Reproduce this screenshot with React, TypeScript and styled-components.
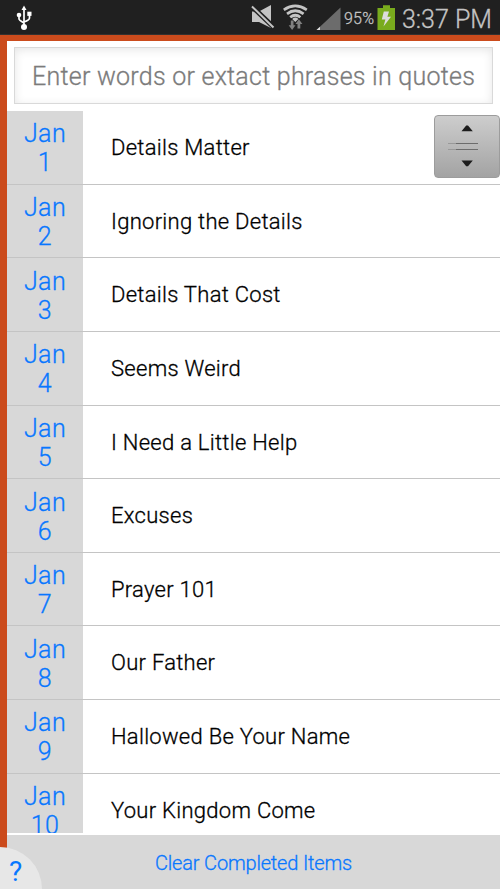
import styled, { createGlobalStyle } from "styled-components";

const GlobalStyle = createGlobalStyle`
  * { box-sizing: border-box; }
  html, body, #root { height: 100%; }
  body {
    margin: 0;
    overflow: hidden;
    font-family: Roboto, sans-serif;
    font-weight: 300;
    -webkit-text-stroke-width: 0.3px;
    background: #cb4b1c;
  }
`;

const Screen = styled.div`
  position: relative;
  width: 500px;
  height: 889px;
  display: flex;
  flex-direction: column;
  overflow: hidden;
  background: #cb4b1c;
`;

const StatusBar = styled.header`
  height: 35px;
  flex-shrink: 0;
  display: flex;
  align-items: flex-start;
  padding: 0 8px 0 16px;
  background: #202020;
  border-bottom: 1px solid #33302f;
  color: #c4c4c4;

  svg { display: block; flex-shrink: 0; }
`;

const StatusIcons = styled.div`
  display: flex;
  margin-left: auto;
`;

const BatteryLevel = styled.span`
  width: 33px;
  margin-left: 3px;
  font-size: 16px;
  line-height: 37px;
  letter-spacing: 0.2px;
  white-space: nowrap;
`;

const Clock = styled.span`
  width: 90px;
  margin-left: 7px;
  font-size: 25px;
  line-height: 39px;
  white-space: nowrap;
`;

const Panel = styled.main`
  flex: 1;
  min-height: 0;
  margin: 6px 0 0 7px;
  display: flex;
  flex-direction: column;
  background: #fff;
`;

const SearchArea = styled.div`
  height: 70px;
  flex-shrink: 0;
  padding: 6px 7px 7px;
`;

const SearchInput = styled.input`
  display: block;
  width: 100%;
  height: 57px;
  padding: 2px 0 0 17px;
  border: 1px solid #d9d9d9;
  border-radius: 0;
  outline: none;
  background: #fff;
  box-shadow: inset 0 2px 10px rgba(0, 0, 0, 0.1);
  font-family: inherit;
  font-size: 25px;
  font-weight: inherit;
  letter-spacing: 0.25px;
  color: #000;

  &::placeholder { color: #7b7b7b; opacity: 1; }
`;

const ListArea = styled.section`
  position: relative;
  height: 722px;
  flex-shrink: 0;
  overflow: hidden;
`;

const Row = styled.article`
  height: 73.65px;
  display: flex;
  border-bottom: 1.4px solid #c4c4c4;
`;

const DateCell = styled.div`
  width: 76px;
  flex-shrink: 0;
  padding-top: 8.3px;
  background: #d8d8d8;
  color: #0877ff;
  font-size: 25px;
  line-height: 29px;
  text-align: center;
  letter-spacing: 0.4px;

  span { display: block; }
`;

const RowTitle = styled.div`
  flex: 1;
  padding-left: 28px;
  color: #000;
  font-size: 22px;
  line-height: 74.6px;
  letter-spacing: 0.28px;
  white-space: nowrap;
`;

const ScrollHandle = styled.div`
  position: absolute;
  top: 4px;
  right: 0;
  width: 66px;
  height: 63px;
  border: 1px solid #9c9c9c;
  border-radius: 4px;
  background: linear-gradient(#cdcdcd, #a3a3a3);

  svg { display: block; }
`;

const Footer = styled.footer`
  flex: 1;
  margin-top: 2px;
  display: flex;
  justify-content: center;
  background: #d8d8d8;
`;

const ClearButton = styled.button`
  height: 54px;
  padding: 0;
  border: 0;
  background: none;
  color: #0877ff;
  font-family: inherit;
  font-size: 20px;
  font-weight: inherit;
  line-height: 56px;
  letter-spacing: -0.18px;
`;

const HelpButton = styled.button`
  position: absolute;
  left: 0;
  bottom: 0;
  width: 42px;
  height: 42px;
  padding: 8px 11px 0 0;
  border: 0;
  border-top-right-radius: 42px;
  background: #e7e7e7;
  color: #0877ff;
  font-family: inherit;
  font-size: 28px;
  font-weight: 400;
  line-height: 34px;
  -webkit-text-stroke-width: 0;
`;

const titles = [
  "Details Matter",
  "Ignoring the Details",
  "Details That Cost",
  "Seems Weird",
  "I Need a Little Help",
  "Excuses",
  "Prayer 101",
  "Our Father",
  "Hallowed Be Your Name",
  "Your Kingdom Come",
];

const UsbIcon = () => (
  <svg width="17" height="34" viewBox="16 0 17 34" fill="#fff" stroke="#fff">
    <path d="M24 9V27M19 15V19Q19 20 24 23M29.5 14V18Q29.5 20 24 22" fill="none" strokeWidth="1.7" />
    <path d="M24 5.5L26.5 10H21.5Z" stroke="none" />
    <circle cx="19" cy="15" r="2.3" stroke="none" />
    <rect x="27.3" y="11.7" width="4.2" height="4.2" stroke="none" />
    <circle cx="24" cy="27" r="3" stroke="none" />
  </svg>
);

const MuteIcon = () => (
  <svg width="24" height="34" viewBox="251 0 24 34">
    <path d="M252 11.5H259L271 5V28L259 22H252Z" fill="#c4c4c4" />
    <path d="M251.5 6L274 27.5" stroke="#202020" strokeWidth="5" />
    <path d="M252 6.5L273.5 27.5" stroke="#c4c4c4" strokeWidth="2" />
  </svg>
);

const WifiIcon = () => (
  <svg width="26" height="34" viewBox="282 0 26 34">
    <g fill="none" stroke="#c4c4c4" strokeWidth="2.7">
      <path d="M283.8 9.8Q295.3 2 306.8 9.8" />
      <path d="M287 13.8Q295.3 7.7 303.6 13.8" />
      <path d="M290.2 17.3Q295.3 13.2 300.4 17.3" />
    </g>
    <path d="M292.2 19Q295.3 16.2 298.4 19L295.3 22Z" fill="#c4c4c4" />
    <path d="M290.8 20.5H293.5V25.2H295.5L292.1 30L288.7 25.2H290.8ZM297.5 28.5H300.3V24H302.4L298.9 19.3L295.5 24H297.5Z" fill="#808080" />
  </svg>
);

const SignalIcon = () => (
  <svg width="25" height="34" viewBox="316 0 25 34">
    <path d="M316.5 30L340.5 7.5V30Z" fill="#6c6c6c" />
    <path d="M316.5 30L320 26.7V30Z" fill="#ddd" />
  </svg>
);

const BatteryIcon = () => (
  <svg width="18" height="34" viewBox="377 0 18 34">
    <path d="M377.5 8H383V5.3H390V8H395V30H377.5Z" fill="#79ab1d" />
    <path d="M383.8 11.5H389L387.4 16.7H391L383.5 26.5L385.4 19.5H381.8Z" fill="#ddd" />
  </svg>
);

const App = () => (
  <Screen>
    <GlobalStyle />
    <StatusBar>
      <UsbIcon />
      <StatusIcons>
        <MuteIcon />
        <svg width="7" height="34" />
        <WifiIcon />
        <svg width="8" height="34" />
        <SignalIcon />
        <BatteryLevel>95%</BatteryLevel>
        <BatteryIcon />
        <Clock>3:37 PM</Clock>
      </StatusIcons>
    </StatusBar>
    <Panel>
      <SearchArea>
        <SearchInput placeholder="Enter words or extact phrases in quotes" />
      </SearchArea>
      <ListArea>
        {titles.map((title, index) => (
          <Row key={title}>
            <DateCell>
              <span>Jan</span>
              <span>{index + 1}</span>
            </DateCell>
            <RowTitle>{title}</RowTitle>
          </Row>
        ))}
        <ScrollHandle>
          <svg width="64" height="61" viewBox="435 116 64 61">
            <path d="M461.5 131.3L466.2 125.5H468L472.8 131.3ZM461.5 160.5L466.2 166.3H468L472.8 160.5Z" fill="#1c1c1c" />
            <path d="M448 143.5H456M448 149.5H456" stroke="#999" />
            <path d="M456 143.5H478M456 149.5H478" stroke="#6c6c6c" />
          </svg>
        </ScrollHandle>
      </ListArea>
      <Footer>
        <ClearButton>Clear Completed Items</ClearButton>
      </Footer>
    </Panel>
    <HelpButton>?</HelpButton>
  </Screen>
);

export default App;
